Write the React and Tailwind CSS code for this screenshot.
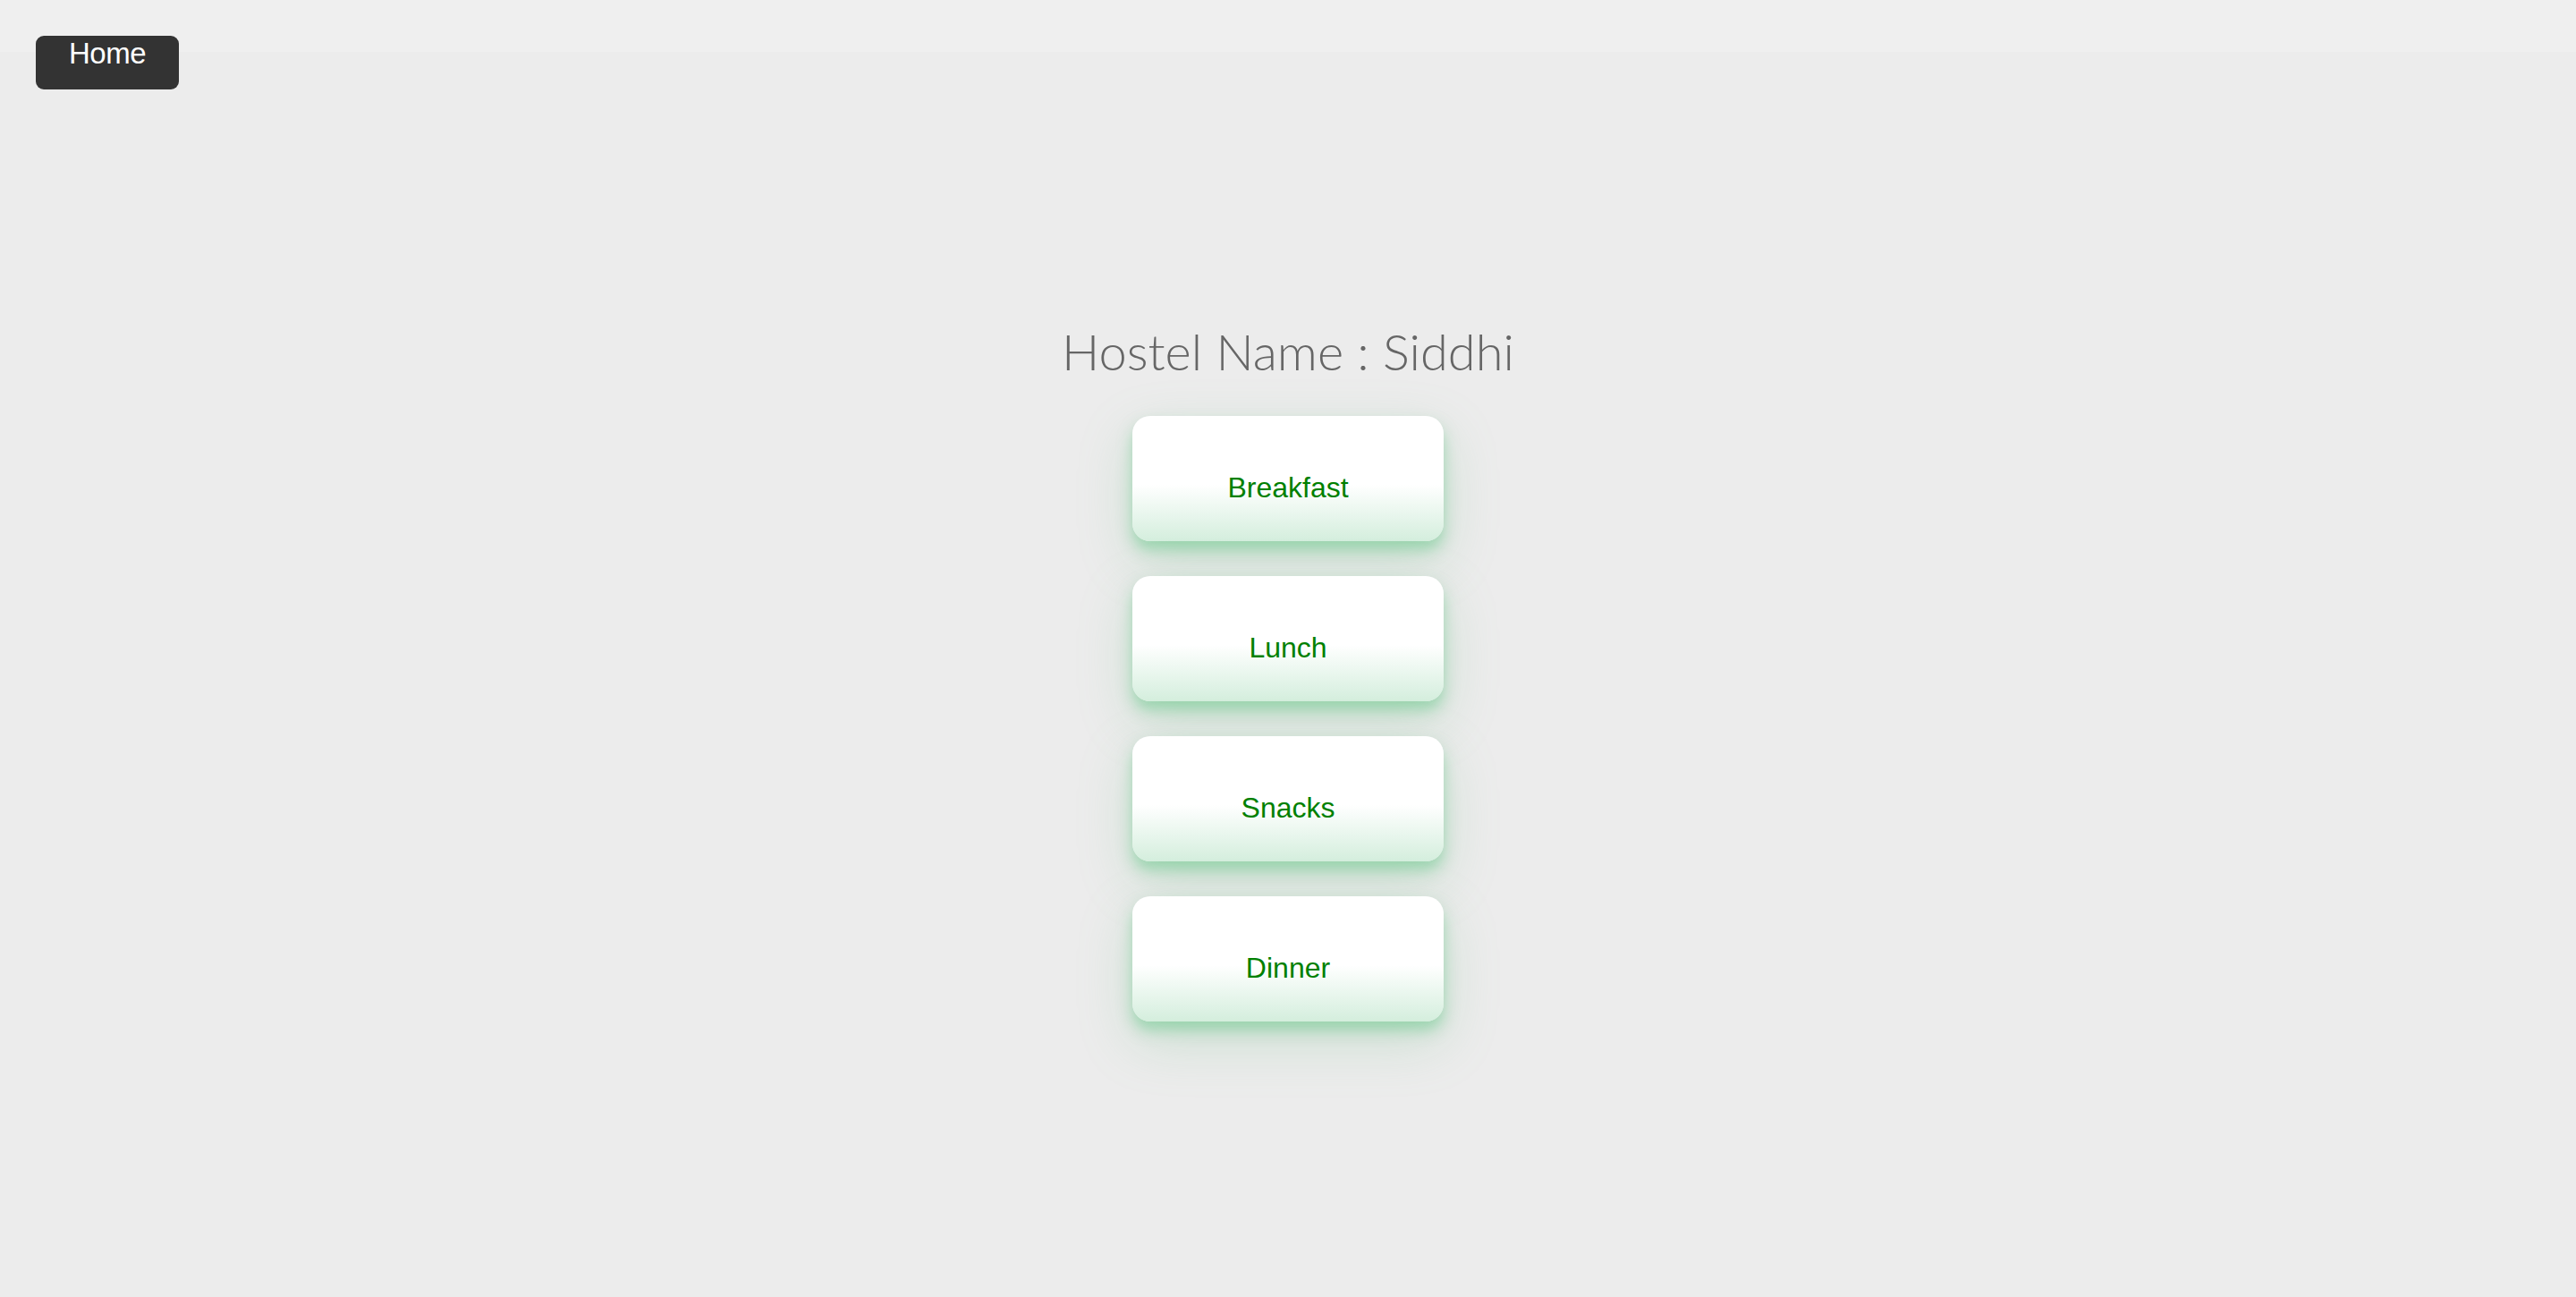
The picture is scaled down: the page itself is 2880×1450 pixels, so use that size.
export default function App() {
  const items = ["Breakfast", "Lunch", "Snacks", "Dinner"];
  return (
    <div className="min-h-[1450px] w-full bg-[#ececec]" style={{ fontFamily: '"Liberation Sans", Arial, sans-serif' }}>
      <div className="h-[58px] w-full bg-[#efefef] relative">
        <button className="absolute left-[40px] top-[40px] w-[160px] h-[60px] rounded-[9px] bg-[#333333] text-white text-[33px] leading-[36px] flex justify-center pt-[2px] tracking-[-0.5px]">
          Home
        </button>
      </div>
      <div className="flex flex-col items-center">
        <h1
          className="mt-[300px] text-[#666666] text-[56px] leading-[70px] font-light"
          style={{ fontFamily: 'Lato, "Open Sans", sans-serif' }}
        >
          Hostel Name : Siddhi
        </h1>
        <div className="mt-[37px] flex flex-col gap-[39px]">
          {items.map((t) => (
            <div
              key={t}
              className="w-[348px] h-[140px] rounded-[20px] bg-gradient-to-b from-white from-55% to-[#d4eedd] shadow-[0_10px_16px_rgba(100,200,135,0.5),0_22px_60px_rgba(120,190,140,0.28)] flex justify-center pt-[60px]"
            >
              <span className="text-[#008000] text-[32px] leading-[40px]">{t}</span>
            </div>
          ))}
        </div>
      </div>
    </div>
  );
}
